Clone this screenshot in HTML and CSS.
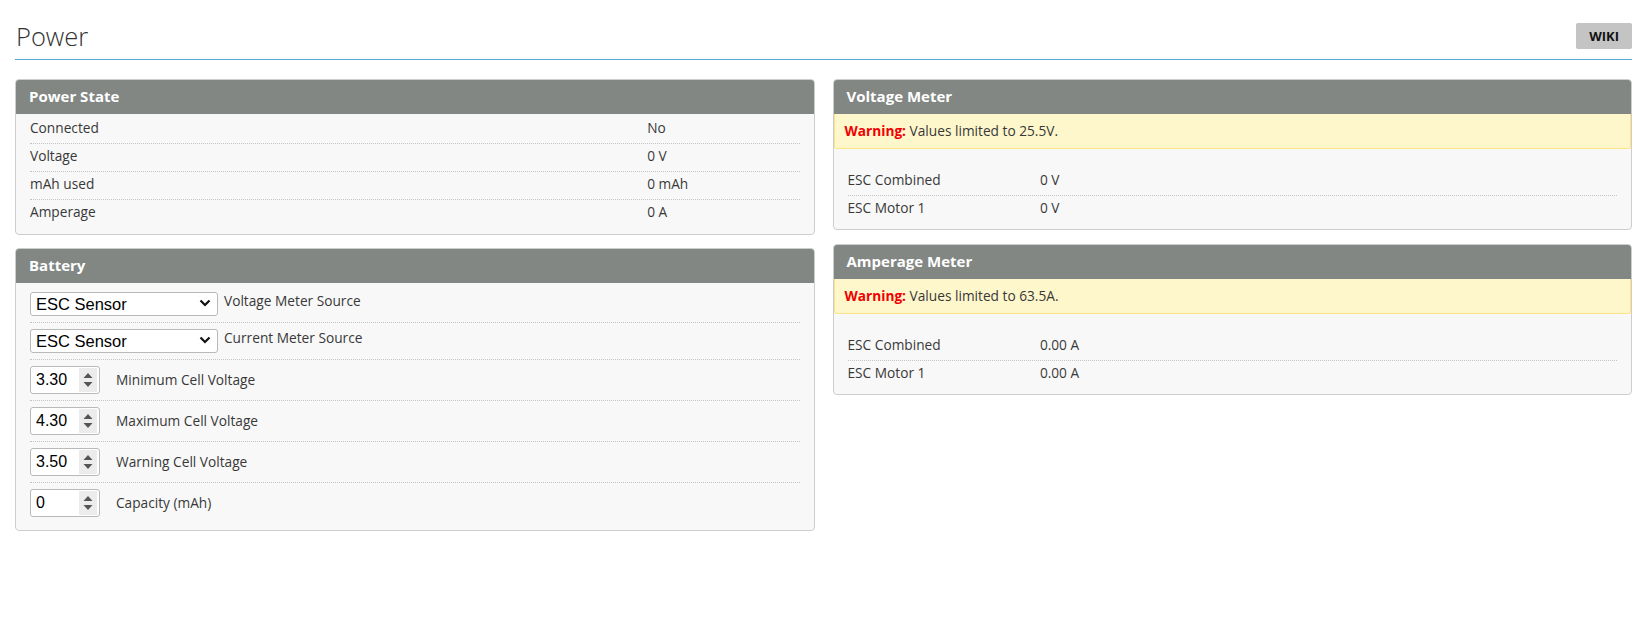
FILE: index.html
```html
<!DOCTYPE html>
<html>
<head>
<meta charset="utf-8">
<link rel="stylesheet" href="styles.css">
</head>
<body>
<div class="page">
  <div class="page-header">
    <h1 class="title">Power</h1>
    <a class="wiki">WIKI</a>
  </div>
  <div class="columns">
    <div class="col">
      <div class="panel">
        <div class="panel-head">Power State</div>
        <div class="panel-body list">
          <div class="row"><span class="lbl lbl-wide">Connected</span><span class="val">No</span></div>
          <div class="row"><span class="lbl lbl-wide">Voltage</span><span class="val">0 V</span></div>
          <div class="row"><span class="lbl lbl-wide">mAh used</span><span class="val">0 mAh</span></div>
          <div class="row"><span class="lbl lbl-wide">Amperage</span><span class="val">0 A</span></div>
        </div>
      </div>
      <div class="panel">
        <div class="panel-head">Battery</div>
        <div class="panel-body battery">
          <div class="frow">
            <div class="select">
              <select><option>ESC Sensor</option></select>
              <svg class="chev" width="12" height="8" viewBox="0 0 12 8"><path d="M1.5 1.5 L6 6 L10.5 1.5" fill="none" stroke="#111" stroke-width="2.2"/></svg>
            </div>
            <span class="flabel top">Voltage Meter Source</span>
          </div>
          <div class="frow">
            <div class="select">
              <select><option>ESC Sensor</option></select>
              <svg class="chev" width="12" height="8" viewBox="0 0 12 8"><path d="M1.5 1.5 L6 6 L10.5 1.5" fill="none" stroke="#111" stroke-width="2.2"/></svg>
            </div>
            <span class="flabel top">Current Meter Source</span>
          </div>
          <div class="frow num-row">
            <div class="num"><input type="text" value="3.30"><span class="spin"><svg width="10" height="16" viewBox="0 0 10 16"><path d="M0.5 6 L5 1 L9.5 6 Z M0.5 10 L5 15 L9.5 10 Z" fill="#555"/></svg></span></div>
            <span class="flabel">Minimum Cell Voltage</span>
          </div>
          <div class="frow num-row">
            <div class="num"><input type="text" value="4.30"><span class="spin"><svg width="10" height="16" viewBox="0 0 10 16"><path d="M0.5 6 L5 1 L9.5 6 Z M0.5 10 L5 15 L9.5 10 Z" fill="#555"/></svg></span></div>
            <span class="flabel">Maximum Cell Voltage</span>
          </div>
          <div class="frow num-row">
            <div class="num"><input type="text" value="3.50"><span class="spin"><svg width="10" height="16" viewBox="0 0 10 16"><path d="M0.5 6 L5 1 L9.5 6 Z M0.5 10 L5 15 L9.5 10 Z" fill="#555"/></svg></span></div>
            <span class="flabel">Warning Cell Voltage</span>
          </div>
          <div class="frow num-row">
            <div class="num"><input type="text" value="0"><span class="spin"><svg width="10" height="16" viewBox="0 0 10 16"><path d="M0.5 6 L5 1 L9.5 6 Z M0.5 10 L5 15 L9.5 10 Z" fill="#555"/></svg></span></div>
            <span class="flabel">Capacity (mAh)</span>
          </div>
        </div>
      </div>
    </div>
    <div class="col col-right">
      <div class="panel">
        <div class="panel-head">Voltage Meter</div>
        <div class="warning"><b>Warning:</b> Values limited to 25.5V.</div>
        <div class="panel-body list meter">
          <div class="row"><span class="lbl lbl-narrow">ESC Combined</span><span class="val">0 V</span></div>
          <div class="row"><span class="lbl lbl-narrow">ESC Motor 1</span><span class="val">0 V</span></div>
        </div>
      </div>
      <div class="panel">
        <div class="panel-head">Amperage Meter</div>
        <div class="warning"><b>Warning:</b> Values limited to 63.5A.</div>
        <div class="panel-body list meter">
          <div class="row"><span class="lbl lbl-narrow">ESC Combined</span><span class="val">0.00 A</span></div>
          <div class="row"><span class="lbl lbl-narrow">ESC Motor 1</span><span class="val">0.00 A</span></div>
        </div>
      </div>
    </div>
  </div>
</div>
</body>
</html>
```
FILE: styles.css
```css
* { box-sizing: border-box; }
body {
  margin: 0;
  background: #fff;
  font-family: "Open Sans", "Liberation Sans", sans-serif;
  font-size: 13.7px;
  color: #383838;
}
.page {
  padding: 0 18px 0 15px;
}
.page-header {
  display: flex;
  justify-content: space-between;
  align-items: flex-start;
  border-bottom: 1px solid #59a9d8;
}
.title {
  margin: 19px 0 0 1px;
  padding-bottom: 6px;
  font-size: 25.5px;
  line-height: 34px;
  font-weight: 300;
  color: #333;
}
.wiki {
  margin-top: 23px;
  height: 26px;
  line-height: 26px;
  padding: 0 13px;
  background: #c4c4c4;
  border-radius: 2px;
  font-size: 13px;
  font-weight: 700;
  color: #111;
}
.columns {
  margin-top: 19px;
  display: grid;
  grid-template-columns: 1fr 1fr;
  column-gap: 18px;
  align-items: start;
}
.col {
  display: flex;
  flex-direction: column;
  gap: 13px;
}
.col-right {
  gap: 14px;
}
.panel {
  border: 1px solid #cdcdcd;
  border-radius: 4px;
  background: #f8f8f8;
  overflow: hidden;
}
.panel-head {
  height: 34px;
  line-height: 33px;
  padding: 0 13px;
  background: #828784;
  color: #fff;
  font-weight: 700;
  font-size: 15px;
}
.panel-body {
  padding: 2px 14px 7px;
}
.list .row {
  display: flex;
  padding: 2px 0 6px;
  line-height: 19px;
  border-bottom: 1px dotted #c4c4c4;
}
.list .row:last-child {
  border-bottom: none;
}
.lbl-wide { width: 80.2%; }
.lbl-narrow { width: 25%; }
.warning {
  height: 35px;
  line-height: 34px;
  padding: 0 10px;
  background: #fff7cc;
  border: 1px solid #fde383;
  border-top: none;
  border-radius: 0 0 3px 3px;
}
.warning b {
  color: #f00000;
  font-weight: 700;
}
.meter {
  padding-top: 19px;
  padding-bottom: 6px;
}
.battery {
  padding-top: 3px;
  padding-bottom: 7px;
}
.frow {
  display: flex;
  align-items: center;
  padding: 6px 0;
  border-bottom: 1px dotted #c4c4c4;
}
.frow:last-child { border-bottom: none; }
.select {
  position: relative;
  width: 188px;
  height: 24px;
  flex: none;
}
.select select {
  -webkit-appearance: none;
  appearance: none;
  width: 100%;
  height: 100%;
  margin: 0;
  border: 1px solid #b9b9b9;
  border-radius: 3px;
  background: #fff;
  font-family: "Liberation Sans", Arial, sans-serif;
  font-size: 16.5px;
  color: #000;
  padding: 0 5px;
}
.chev {
  position: absolute;
  right: 7px;
  top: 7px;
  pointer-events: none;
}
.flabel {
  margin-left: 16px;
  line-height: 20px;
}
.flabel.top {
  margin-left: 6px;
  align-self: flex-start;
  margin-top: -1px;
}
.num {
  display: flex;
  width: 70px;
  height: 28px;
  flex: none;
  border: 1px solid #b9b9b9;
  border-radius: 3px;
  background: #fff;
  overflow: hidden;
}
.num input {
  width: 48px;
  border: none;
  outline: none;
  padding: 0 0 0 5px;
  margin: 0;
  background: transparent;
  font-family: "Liberation Sans", Arial, sans-serif;
  font-size: 16px;
  color: #000;
}
.spin {
  margin: 1px 1px 1px 0;
  width: 18px;
  background: #ececec;
  display: flex;
  align-items: center;
  justify-content: center;
}
```
